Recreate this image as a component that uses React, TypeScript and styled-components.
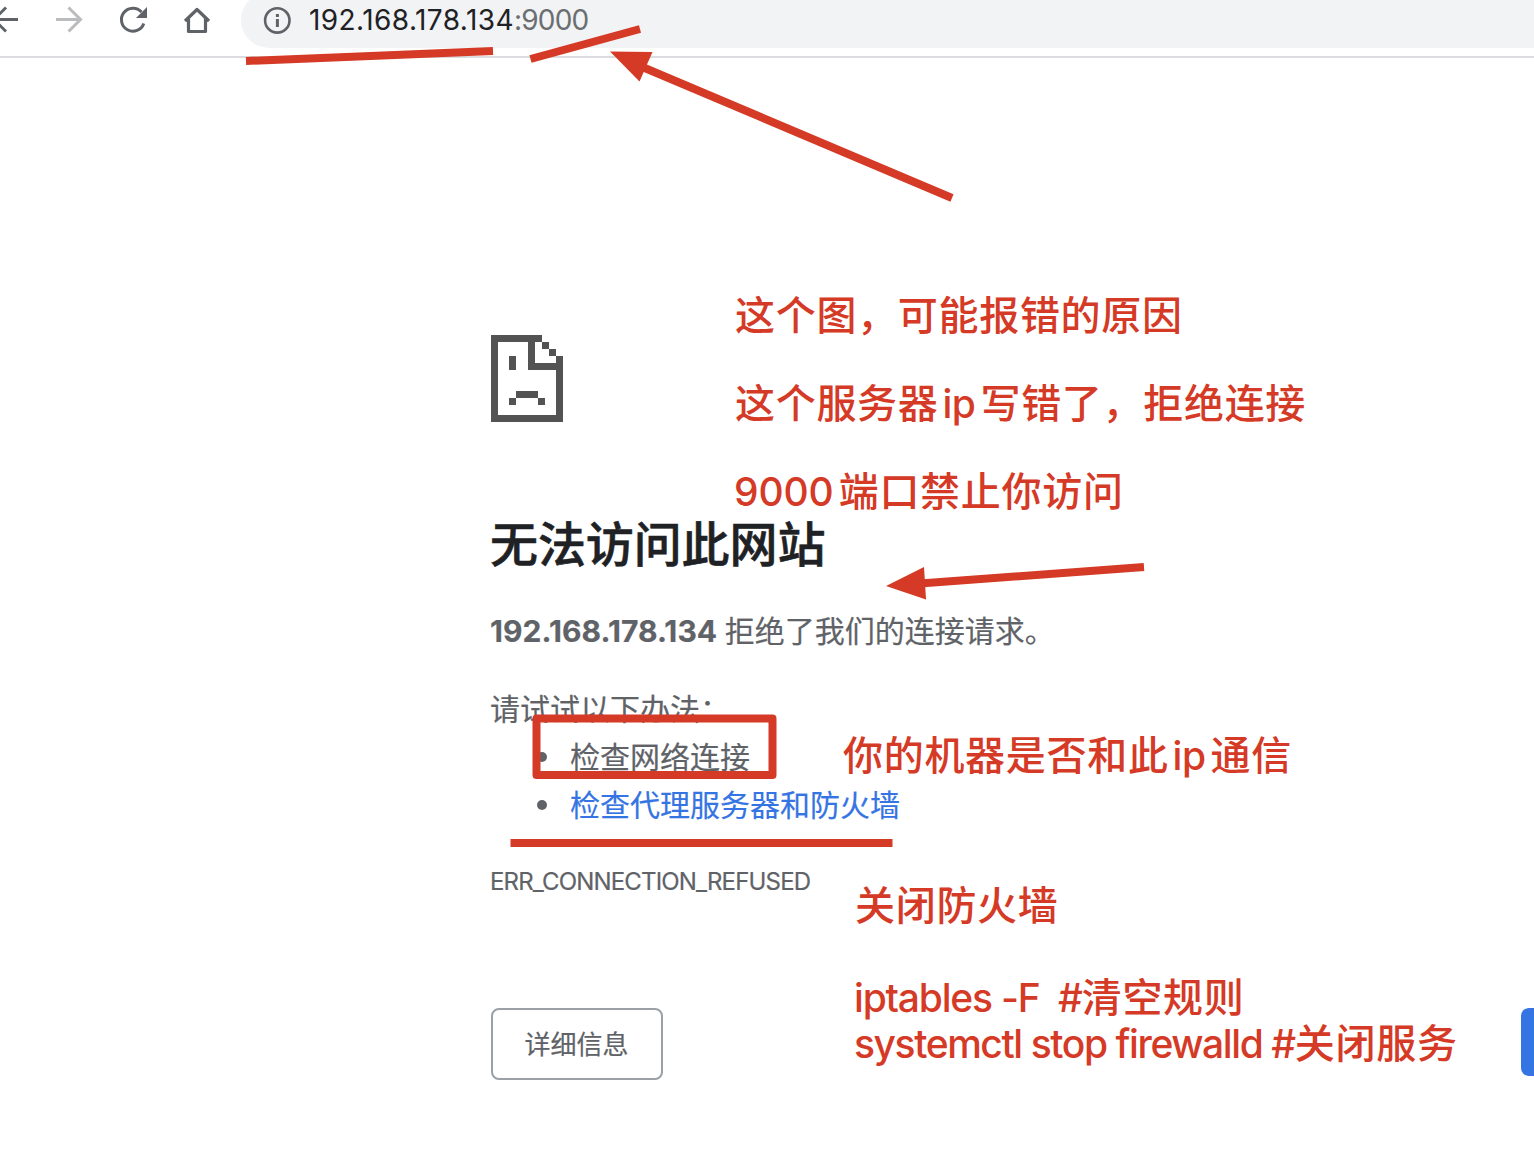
import React from "react";
import styled, { createGlobalStyle } from "styled-components";

const RED = "#d53a26";
const FONT = `Inter, "Noto Sans CJK SC", sans-serif`;

const GlobalStyle = createGlobalStyle`
  * { box-sizing: border-box; }
  body { margin: 0; background: #fff; font-family: ${FONT}; overflow: hidden; }
`;

const Page = styled.div`
  position: relative;
  width: 1534px;
  height: 1164px;
  overflow: hidden;
  background: #fff;
`;

const Toolbar = styled.header`
  display: flex;
  height: 58px;
  border-bottom: 2px solid #dadce0;
  overflow: hidden;
`;

const NavIcons = styled.nav`
  flex: 0 0 241px;
  height: 40px;
`;

const Omnibox = styled.div`
  flex: 1;
  display: flex;
  align-items: center;
  height: 56px;
  margin-top: -8px;
  padding-left: 22px;
  border-radius: 28px 0 0 28px;
  background: #f1f3f4;
`;

const Address = styled.div`
  margin-left: 18px;
  font-size: 28px;
  line-height: 40px;
  font-weight: 420;
  letter-spacing: 0.43px;
  color: #202124;
  white-space: nowrap;
`;

const Port = styled.span`
  color: #6b6e71;
  letter-spacing: -0.8px;
`;

const Main = styled.main`
  display: flex;
  flex-direction: column;
  align-items: flex-start;
  padding: 277px 0 0 490px;
  color: #5f6368;
  font-size: 30px;
  -webkit-text-stroke: 0.2px;
`;

const Title = styled.h1`
  margin: 87px 0 0;
  font-size: 48px;
  line-height: 72px;
  font-weight: 500;
  letter-spacing: -0.1px;
  color: #202124;
  white-space: nowrap;
  -webkit-text-stroke: 0.6px;
`;

const Paragraph = styled.p`
  margin: 26px 0 0;
  line-height: 48px;
  white-space: nowrap;
`;

const Host = styled.strong`
  font-weight: 700;
  letter-spacing: 0.08px;
  margin-right: -1px;
`;

const Hint = styled(Paragraph)`
  margin-top: 30px;
`;

const Suggestions = styled.ul`
  margin: 0;
  padding: 0 0 0 47px;
  list-style: none;
`;

const Suggestion = styled.li<{ $link?: boolean }>`
  display: flex;
  align-items: center;
  gap: 23px;
  height: 48px;
  line-height: 48px;
  white-space: nowrap;
  color: ${(p) => (p.$link ? "#3574e3" : "#5f6368")};

  &::before {
    content: "";
    width: 10px;
    height: 10px;
    border-radius: 50%;
    background: #5f6368;
  }
`;

const ErrorCode = styled.div`
  margin-top: 35px;
  font-size: 24px;
  line-height: 36px;
  letter-spacing: -0.83px;
`;

const Details = styled.button`
  margin: 108px 0 0 1px;
  width: 172px;
  height: 72px;
  padding: 1px 1px 0 0;
  border: 2px solid #9aa0a6;
  border-radius: 8px;
  background: #fff;
  color: #5f6368;
  font: 26px/67px ${FONT};
  -webkit-text-stroke: 0.2px;
`;

const ReloadEdge = styled.div`
  position: absolute;
  left: 1521px;
  top: 1008px;
  width: 40px;
  height: 68px;
  border-radius: 8px;
  background: #3574e3;
`;

const Markup = styled.svg`
  position: absolute;
  inset: 0;
`;

const Note = styled.div<{ $x: number; $y: number; $pitch: number }>`
  position: absolute;
  left: ${(p) => p.$x}px;
  top: ${(p) => p.$y}px;
  font-size: 40px;
  font-weight: 500;
  line-height: ${(p) => p.$pitch}px;
  letter-spacing: 0.7px;
  color: ${RED};
  white-space: pre;
`;

const Latin = styled.span<{ $track: number; $before?: number; $after?: number }>`
  font-size: 39px;
  font-weight: 480;
  letter-spacing: ${(p) => p.$track}px;
  margin-left: ${(p) => p.$before ?? 0}px;
  margin-right: ${(p) => p.$after ?? 0}px;
`;

const SadIcon = styled.svg`
  display: block;
  margin-left: 1px;
`;

const ToolbarIcons = () => (
  <svg width="241" height="40" fill="none" stroke="#5f6368" strokeWidth="3">
    <path d="M18 19.5H-4M6 7.5L-6 19.5L6 31.5" />
    <path d="M56 19.5H80M68.500 7.500L80.500 19.500L68.500 31.500" stroke="#babcbe" />
    <path d="M143.800 23.500A11.500 11.500 0 1 1 141.500 12" />
    <path d="M147 7V18H136Z" fill="#5f6368" stroke="none" />
    <path d="M185 21L197 9.500L209 21M188.500 18V31.500H205.500V18" strokeWidth="3.200" strokeLinejoin="round" />
  </svg>
);

const InfoIcon = () => (
  <svg width="28" height="28" viewBox="0 0 28 28">
    <circle cx="14.300" cy="14.400" r="12.200" fill="none" stroke="#5f6368" strokeWidth="2.600" />
    <path d="M12.900 8h3v3h-3zM12.900 13h3v8h-3z" fill="#5f6368" />
  </svg>
);

const SadPage = () => (
  <SadIcon width="72" height="87" fill="#535353" shapeRendering="crispEdges">
    <path d="M0 0H51V7H0ZM0 0H7V87H0ZM0 80H72V87H0ZM65 21H72V87H65ZM37 0H44V35H37ZM37 28H72V35H37Z" />
    <path d="M51 7h7v7h-7zM58 14h7v7h-7zM18 21h7v14h-7zM25 56h22v7h-22zM18 63h7v7h-7zM47 63h7v7h-7z" />
  </SadIcon>
);

export default function App() {
  return (
    <>
      <GlobalStyle />
      <Page>
        <Toolbar>
          <NavIcons>
            <ToolbarIcons />
          </NavIcons>
          <Omnibox>
            <InfoIcon />
            <Address>
              192.168.178.134<Port>:9000</Port>
            </Address>
          </Omnibox>
        </Toolbar>
        <Main>
          <SadPage />
          <Title>无法访问此网站</Title>
          <Paragraph>
            <Host>192.168.178.134</Host> 拒绝了我们的连接请求。
          </Paragraph>
          <Hint>请试试以下办法：</Hint>
          <Suggestions>
            <Suggestion>检查网络连接</Suggestion>
            <Suggestion $link>检查代理服务器和防火墙</Suggestion>
          </Suggestions>
          <ErrorCode>ERR_CONNECTION_REFUSED</ErrorCode>
          <Details>详细信息</Details>
        </Main>
        <ReloadEdge />
        <Markup width="1534" height="1164" fill="none" stroke={RED} strokeWidth="8">
          <path d="M246 61L493 51" />
          <path d="M530.500 59L640 29" />
          <path d="M952 198L640 66" />
          <path d="M610 51.500L652.500 52L639.500 81.500Z" fill={RED} stroke="none" />
          <path d="M1144 567L920 583.500" />
          <path d="M886 586L924 567L926 599.500Z" fill={RED} stroke="none" />
          <rect x="536.500" y="718.500" width="236" height="56.500" strokeLinejoin="round" />
          <path d="M510.500 843H892.500" />
        </Markup>
        <Note $x={735} $y={272} $pitch={88}>
          <div>这个图，可能报错的原因</div>
          <div>
            这个服务器<Latin $track={-0.5} $before={4} $after={5}>ip</Latin>写错了，拒绝连接
          </div>
          <div>
            <Latin $track={-0.1} $before={-1} $after={5}>9000</Latin>端口禁止你访问
          </div>
        </Note>
        <Note $x={843} $y={712} $pitch={88}>
          你的机器是否和此<Latin $track={-0.5} $before={4} $after={5}>ip</Latin>通信
        </Note>
        <Note $x={855} $y={883} $pitch={46}>关闭防火墙</Note>
        <Note $x={854} $y={975} $pitch={46}>
          <div>
            <Latin $track={-1.2}>{"iptables -F  #"}</Latin>清空规则
          </div>
          <div>
            <Latin $track={-1.42}>{"systemctl stop firewalld #"}</Latin>关闭服务
          </div>
        </Note>
      </Page>
    </>
  );
}
